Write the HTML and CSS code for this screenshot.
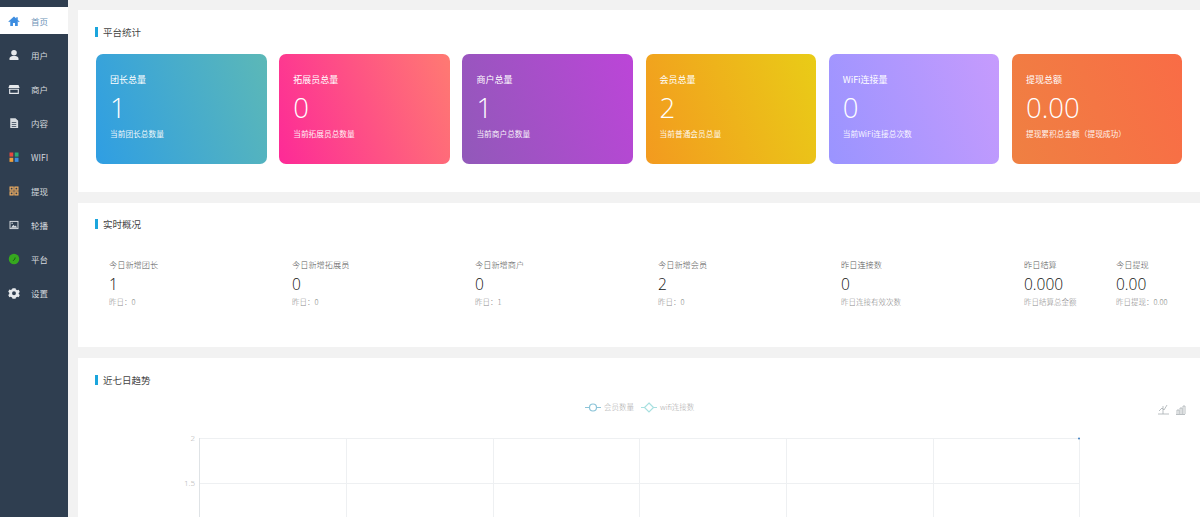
FILE: index.html
```html
<!DOCTYPE html>
<html lang="zh-CN">
<head>
<meta charset="utf-8">
<title>首页</title>
<link rel="stylesheet" href="styles.css">
</head>
<body>
<div class="app">
  <nav class="sidebar">
    <a class="nav-item active"><svg class="ico" viewBox="0 0 16 16"><path fill="#3d8de0" d="M8 2 0.5 8.6l1 1L3 8.4V14.5h3.6v-4h2.8v4H13V8.4l1.500 1.200 1-1L13 6.500V3h-2v1.800z"/></svg><span>首页</span></a>
    <a class="nav-item"><svg class="ico" viewBox="0 0 16 16"><circle cx="8" cy="5" r="3.700" fill="#e6e9ec"/><path fill="#e6e9ec" d="M2 14.500v-2c0-2 2.500-3 4-3.300h4c1.500.3 4 1.300 4 3.300v2z"/></svg><span>用户</span></a>
    <a class="nav-item"><svg class="ico" viewBox="0 0 16 16"><path fill="#e6e9ec" d="M2 2.500h12l1.500 4H.5z"/><path fill="#e6e9ec" d="M1.500 7.500h13v7h-13zM3 9v4h10V9z" fill-rule="evenodd"/></svg><span>商户</span></a>
    <a class="nav-item"><svg class="ico" viewBox="0 0 16 16"><path fill="#d8dce0" fill-rule="evenodd" d="M3 1.500h7l3.500 3.500v9.500H3zM5 7v1h6V7zm0 2.500v1h6v-1zM5 12v1h6v-1z"/></svg><span>内容</span></a>
    <a class="nav-item"><svg class="ico" viewBox="0 0 16 16"><rect x="2" y="2" width="5" height="5.500" fill="#e5483f"/><rect x="9" y="2" width="5" height="5.500" fill="#2aa876"/><rect x="2" y="9" width="5" height="5.500" fill="#f0a03c"/><rect x="9" y="9" width="5" height="5.500" fill="#3d8de0"/></svg><span>WIFI</span></a>
    <a class="nav-item"><svg class="ico" viewBox="0 0 16 16"><g fill="none" stroke="#f0ae62" stroke-width="1.600"><rect x="2.800" y="2.800" width="4" height="4"/><rect x="9.200" y="2.800" width="4" height="4"/><rect x="2.800" y="9.200" width="4" height="4"/><rect x="9.200" y="9.200" width="4" height="4"/></g></svg><span>提现</span></a>
    <a class="nav-item"><svg class="ico" viewBox="0 0 16 16"><rect x="2.700" y="3.200" width="10.600" height="9.600" fill="none" stroke="#d8dce0" stroke-width="1.300"/><path fill="#d8dce0" d="M4 11.500 7 7.500l2 2.200 1.500-1.200 1.500 3z"/><circle cx="5.500" cy="5.500" r="1" fill="#d8dce0"/></svg><span>轮播</span></a>
    <a class="nav-item"><svg class="ico" viewBox="0 0 16 16"><circle cx="8" cy="8" r="7" fill="#36a81f"/><path d="M6.500 10c1.500 0 2.700-1.500 3-4" fill="none" stroke="#123f10" stroke-width="1"/></svg><span>平台</span></a>
    <a class="nav-item"><svg class="ico" viewBox="0 0 16 16"><path fill="#e6e9ec" fill-rule="evenodd" d="M6 1.500h4l.6 1.800 1.800.9 1.800-.5 1.500 3-1.400 1.300v1.300l1.400 1.300-1.500 3-1.800-.5-1.800.9-.6 1.800H6l-.6-1.800-1.800-.9-1.800.5-1.500-3 1.400-1.300V7.700L.3 6.400l1.500-3 1.800.5 1.800-.9zM8 5.700a2.600 2.600 0 1 0 0 5.200 2.600 2.600 0 0 0 0-5.200z"/></svg><span>设置</span></a>
  </nav>

  <main class="main">
    <section class="panel panel-stats">
      <h2 class="panel-title">平台统计</h2>
      <div class="cards">
        <div class="card c1"><div class="card-label">团长总量</div><div class="card-num">1</div><div class="card-sub">当前团长总数量</div></div>
        <div class="card c2"><div class="card-label">拓展员总量</div><div class="card-num">0</div><div class="card-sub">当前拓展员总数量</div></div>
        <div class="card c3"><div class="card-label">商户总量</div><div class="card-num">1</div><div class="card-sub">当前商户总数量</div></div>
        <div class="card c4"><div class="card-label">会员总量</div><div class="card-num">2</div><div class="card-sub">当前普通会员总量</div></div>
        <div class="card c5"><div class="card-label">WiFi连接量</div><div class="card-num">0</div><div class="card-sub">当前WiFi连接总次数</div></div>
        <div class="card c6"><div class="card-label">提现总额</div><div class="card-num">0.00</div><div class="card-sub">提现累积总金额（提现成功）</div></div>
      </div>
    </section>

    <section class="panel panel-live">
      <h2 class="panel-title">实时概况</h2>
      <div class="live">
        <div class="live-item"><div class="live-label">今日新增团长</div><div class="live-num">1</div><div class="live-sub">昨日：0</div></div>
        <div class="live-item"><div class="live-label">今日新增拓展员</div><div class="live-num">0</div><div class="live-sub">昨日：0</div></div>
        <div class="live-item"><div class="live-label">今日新增商户</div><div class="live-num">0</div><div class="live-sub">昨日：1</div></div>
        <div class="live-item"><div class="live-label">今日新增会员</div><div class="live-num">2</div><div class="live-sub">昨日：0</div></div>
        <div class="live-item"><div class="live-label">昨日连接数</div><div class="live-num">0</div><div class="live-sub">昨日连接有效次数</div></div>
        <div class="live-item"><div class="live-label">昨日结算</div><div class="live-num">0.000</div><div class="live-sub">昨日结算总金额</div></div>
        <div class="live-item"><div class="live-label">今日提现</div><div class="live-num">0.00</div><div class="live-sub">昨日提现：0.00</div></div>
      </div>
    </section>

    <section class="panel panel-chart">
      <h2 class="panel-title">近七日趋势</h2>
      <svg class="chart" viewBox="0 0 1122 140" width="1122" height="140">
        <g stroke="#eef0f2" stroke-width="1" fill="none">
          <path d="M122 52.500H1001M122 97.500H1001"/>
          <path d="M268.500 52V140M415.500 52V140M561.500 52V140M708.500 52V140M855.500 52V140"/>
          <path d="M1001.500 52V140"/>
        </g>
        <path d="M121.500 52V140" stroke="#dfe3e6" fill="none"/>
        <circle cx="1001" cy="52.500" r="1" fill="#3f7fc0"/>
        <g class="axis"><text x="117" y="55" text-anchor="end">2</text><text x="117" y="100" text-anchor="end">1.5</text></g>
        <g fill="none" stroke-width="1">
          <path d="M507 21.500h16" stroke="#8cc4d8"/><circle cx="515" cy="21.500" r="3.500" fill="#fff" stroke="#8cc4d8" stroke-width="1.200"/>
          <path d="M563 21.500h16" stroke="#a8e0e0"/><path d="M571 17l4.500 4.500-4.500 4.500-4.500-4.500z" fill="#fff" stroke="#a8e0e0" stroke-width="1.200"/>
        </g>
        <g class="legend"><text x="526" y="24">会员数量</text><text x="582" y="24">wifi连接数</text></g>
        <g fill="none" stroke="#a8aeb2" stroke-width=".8">
          <path d="M1080 28h11M1081 25l3-3 2 2 3-5M1085 20v8"/>
          <path d="M1098 28.500h9M1099 28v-4h2v4M1102 28v-6h2v6M1105 28v-8h2v8"/>
        </g>
      </svg>
    </section>
  </main>
</div>
</body>
</html>
```
FILE: styles.css
```css
* { box-sizing: border-box; }
html, body { margin: 0; height: 100%; overflow: hidden; }
body { font-family: "Noto Sans CJK SC", "Liberation Sans", sans-serif; font-weight: 300; background: #f2f2f2; color: #333; }
.app { display: flex; height: 517px; }

.sidebar { width: 68px; flex: none; background: #2f3e50; padding-top: 7px; display: flex; flex-direction: column; gap: 7px; }
.nav-item { height: 27px; display: flex; align-items: center; color: #d5d9de; font-size: 8.500px; font-weight: 400; padding-left: 8px; gap: 11px; }
.nav-item.active { background: #fff; color: #6d93b8; }
.ico { width: 12px; height: 12px; flex: none; }

.main { flex: 1; min-width: 0; padding: 10px 0 0 10px; display: flex; flex-direction: column; gap: 11px; }
.panel { background: #fff; padding: 0 18px 0 17px; flex: none; }
.panel-stats { height: 182px; padding-top: 17px; }
.panel-live { height: 144px; padding-top: 16px; }
.panel-chart { height: 170px; padding: 17px 0 0 17px; }

.panel-title { margin: 0; height: 10px; line-height: 10px; border-left: 3px solid #1ba5dc; padding-left: 5px; font-size: 9.500px; font-weight: 400; color: #444; }

.cards { margin: 17px 0 0 1px; display: grid; grid-template-columns: repeat(6, 170.500px); gap: 12.700px; }
.card { height: 110px; border-radius: 7px; color: #fff; padding: 19px 14px 0; }
.c1 { background: linear-gradient(70deg, #2f9ee3, #5cb8b7); }
.c2 { background: linear-gradient(70deg, #fd2a97, #ff7a72); }
.c3 { background: linear-gradient(70deg, #9159b9, #bc45d8); }
.c4 { background: linear-gradient(70deg, #f39a1f, #e9cc17); }
.c5 { background: linear-gradient(70deg, #9a94ff, #c69bfd); }
.c6 { background: linear-gradient(70deg, #ef8042, #f96c46); }
.card-label { font-size: 9px; font-weight: 400; line-height: 14px; }
.card-num { font-family: "Open Sans", sans-serif; font-weight: 300; font-size: 27.500px; line-height: 38px; margin-top: 2px; }
.card-sub { font-size: 7.700px; font-weight: 400; line-height: 12px; margin-top: 1px; opacity: .92; }

.live { margin: 29px 0 0 14px; display: grid; grid-template-columns: repeat(5, 183px) 92px 1fr; }
.live-label { font-size: 8.200px; line-height: 12px; color: #555; }
.live-num { font-family: "Open Sans", sans-serif; font-weight: 300; font-size: 15.500px; line-height: 20px; margin-top: 4px; color: #111; }
.live-sub { font-size: 7.500px; line-height: 12px; margin-top: 2px; color: #888; }

.chart { display: block; margin: 1px 0 0 -17px; }
.axis text { font-family: "Open Sans", sans-serif; font-size: 8px; fill: #aaa; }
.legend text { font-size: 7.500px; fill: #aaa; }
```
